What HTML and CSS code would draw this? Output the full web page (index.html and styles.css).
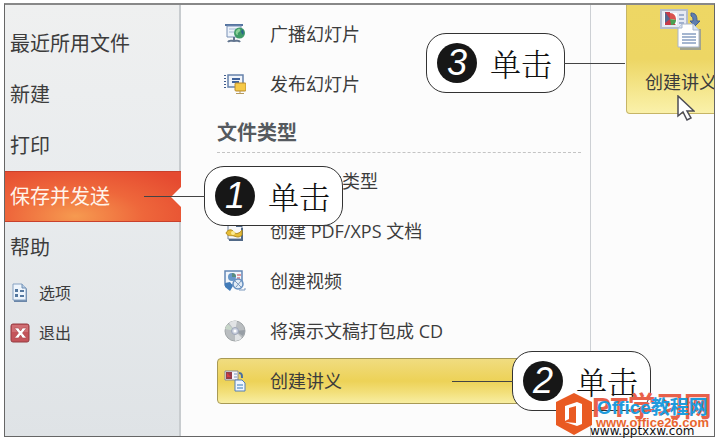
FILE: index.html
```html
<!DOCTYPE html>
<html lang="zh-CN">
<head>
<meta charset="utf-8">
<title>保存并发送</title>
<link rel="stylesheet" href="styles.css">
</head>
<body>
<div class="frame">
  <nav class="sidebar">
    <a class="nav-item" href="#">最近所用文件</a>
    <a class="nav-item" href="#">新建</a>
    <a class="nav-item" href="#">打印</a>
    <a class="nav-item active" href="#">保存并发送</a>
    <a class="nav-item" href="#">帮助</a>
    <a class="nav-item small" href="#">
      <svg class="nav-icon" viewBox="0 0 20 20"><path d="M4 2h9l4 4v13H4z" fill="#6b86a8"/><path d="M3 1h9l4 4v12H3z" fill="#eef5fc" stroke="#86a2c2"/><path d="M12 1v4h4" fill="#b9cfe6" stroke="#6f8eb2"/><path d="M5 6h3v3H5zM5 11h3v3H5z" fill="#54789f"/><path d="M10 8h4M10 13h4" stroke="#54789f" stroke-width="2"/></svg>
      选项</a>
    <a class="nav-item small" href="#">
      <svg class="nav-icon" viewBox="0 0 20 20"><rect x="1" y="1" width="18" height="18" rx="2" fill="#c4545a" stroke="#953c43"/><path d="M2 2h16v7H2z" fill="#d98084" opacity=".6"/><path d="M4.500 5h4l2 3 2-3h4l-4 5 4 5h-4l-2-3-2 3h-4l4-5z" fill="#fff" stroke="#a8464c" stroke-width=".6"/></svg>
      退出</a>
  </nav>
  <main class="content">
    <a class="row" href="#">
      <svg class="icon" viewBox="0 0 22 22"><path d="M1 2h18" stroke="#5574a0" stroke-width="2"/><path d="M3 3h14v11H3z" fill="#edf3fb" stroke="#7890b5"/><path d="M5 6h7M5 9h5" stroke="#a5b9d5"/><path d="M10 14v4M4 19c1-2 3-1 6-1s5-1 6 1" fill="none" stroke="#62758f" stroke-width="2"/><circle cx="15.500" cy="10" r="5.500" fill="#3f9b68"/><path d="M12 8c3-4 5-2 4 0s-3 1-2 4c-2 0-3-2-2-4z" fill="#8bd199"/><path d="M18 6c2 2 2 4 1 6l-2-3z" fill="#2b638b"/></svg>
      <span>广播幻灯片</span></a>
    <a class="row" href="#">
      <svg class="icon" viewBox="0 0 22 22"><path d="M1 2v14" stroke="#405c8e" stroke-width="2" stroke-dasharray="1 2"/><path d="M4 2h15v12H4z" fill="#f1f5fb" stroke="#6681aa" stroke-width="1.500"/><path d="M8 6h8M8 9h7" stroke="#40639b" stroke-width="2"/><rect x="11" y="10" width="11" height="8" rx="1" fill="#f6c947" stroke="#b78a2d"/><path d="M16 18v2M12 20.500h8" stroke="#b69a5d"/></svg>
      <span>发布幻灯片</span></a>
    <h2 class="heading">文件类型</h2>
    <a class="row" href="#">
      <svg class="icon" viewBox="0 0 22 22"><path d="M4 2h14v18H4z" fill="#eef4fb" stroke="#7890b5"/></svg>
      <span>更改文件类型</span></a>
    <a class="row" href="#">
      <svg class="icon" viewBox="0 0 22 22"><path d="M4 1h10l4 4v14H4z" fill="#f7f8fa" stroke="#70819a"/><path d="M13 1v5h5M18 8v12H5" fill="none" stroke="#516987" stroke-width="2"/><path d="M2 13c2-4 6-4 8-1s6 1 8-2v5c-3 3-5 2-8 1s-6 1-8-3z" fill="#e7bd36" stroke="#b28c22"/><circle cx="9" cy="13" r="2" fill="#fbea91"/></svg>
      <span>创建 PDF/XPS 文档</span></a>
    <a class="row" href="#">
      <svg class="icon" viewBox="0 0 22 22"><path d="M1 1h17v14H1z" fill="#f2f6fb" stroke="#6387b5" stroke-width="1.500"/><circle cx="8" cy="7" r="4" fill="#6797c9"/><path d="M8 3a4 4 0 0 1 4 4H8z" fill="#598d7d"/><path d="M13 5h4M13 8h3" stroke="#d47a82" stroke-width="1.500"/><path d="M1 13l5-1 3 4-3 5-5-4z" fill="#427bb8"/><circle cx="14" cy="14" r="5" fill="#e1ebf5" stroke="#668fc0" stroke-width="1.500"/><path d="M11 11l6 6M17 11l-5 6M15 20h6v-2" fill="none" stroke="#7c99bd"/></svg>
      <span>创建视频</span></a>
    <a class="row" href="#">
      <svg class="icon" viewBox="0 0 22 22"><circle cx="11" cy="11" r="10" fill="#b9bdc0" stroke="#a0a5a7"/><path d="M11 11L5 3a10 10 0 0 1 8-2zM11 11l7 7a10 10 0 0 1-7 3z" fill="#e1e3e5"/><path d="M11 11L1 9a10 10 0 0 1 3-5z" fill="#c7d6c9"/><path d="M11 11l10-1a10 10 0 0 1-2 6z" fill="#989fa6"/><circle cx="11" cy="11" r="3.500" fill="#cbd1df" stroke="#9da5b8"/><circle cx="11" cy="11" r="1.500" fill="#fff"/></svg>
      <span>将演示文稿打包成 CD</span></a>
    <a class="row selected" href="#">
      <svg class="icon" viewBox="0 0 22 22"><path d="M1 1h13v9H1z" fill="#f5f5fb" stroke="#898b91"/><path d="M2 2h6v7H2z" fill="#963d48"/><path d="M3 3l4 4H3z" fill="#d83c46"/><path d="M10 4h3M10 7h3" stroke="#7896b9"/><path d="M15 3c3 0 3 2 3 5" fill="none" stroke="#496f9f" stroke-width="2"/><path d="M11 10h7l3 3v8H11z" fill="#eff6ff" stroke="#527eb5"/><path d="M13 15h6M13 18h6" stroke="#73a2d1" stroke-width="1.500"/></svg>
      <span>创建讲义</span></a>
  </main>
  <aside class="panel">
    <button class="tile" type="button">
      <svg class="tile-icon" viewBox="0 0 42 42"><path d="M1 1h26v18H1z" fill="#e6eaf4" stroke="#b4bccb" stroke-width="2"/><path d="M4 4h13v12H4z" fill="#fff"/><path d="M5 3h5v7l6 6H5z" fill="#c63b4a"/><path d="M5 3l5 7-5 4z" fill="#55668f"/><path d="M10 4c4 0 6 3 6 7l-6-1z" fill="#d9534f"/><path d="M10 10l6 1c0 3-2 5-5 5z" fill="#4ba052"/><path d="M19 6h5M19 10h5M19 14h5" stroke="#9fb0ce" stroke-width="2"/><path d="M31 4c5 0 6 3 6 8h3l-5 5-5-5h3c0-3 0-4-2-5z" fill="#607eae" stroke="#425f92"/><path d="M20 20h21v21H20z" fill="#a2a38d"/><path d="M18 19l4-4h11l6 6v17H18z" fill="#fff" stroke="#a8b5cb"/><path d="M18 19h4v-4M33 15v6h6" fill="#d8e4f4" stroke="#a8b5cb"/><path d="M22 25h14M22 28h14M22 31h14M22 34h14" stroke="#889fc1" stroke-width="1.500"/></svg>
      <span>创建讲义</span>
    </button>
  </aside>
</div>

<div class="callout step-1"><b class="number">1</b><span>单击</span></div>
<div class="callout step-2"><b class="number">2</b><span>单击</span></div>
<div class="callout step-3"><b class="number">3</b><span>单击</span></div>
<svg class="cursor" viewBox="0 0 18 26"><path d="M1 1v20l5-4 4 8 4-2-4-7h7z" fill="#fff" stroke="#4c4c55" stroke-width="1.500"/></svg>

<div class="watermark">
  <span class="mark-back">PT学习网</span>
  <svg class="mark-logo" viewBox="0 0 38 42"><path d="M19 0l18 9v23l-18 10L1 32V9z" fill="#e95a22"/><path d="M10 13l12-4 5 2v20l-5 2-12-4 11 1V13l-7 2v11l-4 2z" fill="#fff"/></svg>
  <span class="mark-front">Office教程网</span>
  <span class="mark-url">www.office26.com</span>
  <span class="mark-site">www.pptxxw.com</span>
</div>
</body>
</html>
```
FILE: styles.css
```css
* { box-sizing: border-box; }

body {
  position: relative;
  min-height: 100vh;
  margin: 0;
  padding: 3px 4px 4px;
  display: flex;
  background: #fff;
  color: #3c3c3c;
  font-family: "Open Sans", "Noto Sans CJK SC", sans-serif;
}

a { color: inherit; text-decoration: none; }

.frame {
  flex: 1;
  display: grid;
  grid-template-columns: 176px 410px 1fr;
  border: 1px solid #666;
  border-top: 2px solid #888;
  background: #fcfcfc;
  overflow: hidden;
}

.sidebar {
  padding-top: 13px;
  border-right: 2px solid #c8cccf;
  background: linear-gradient(#eff0f0, #e9ecee 40%, #dfe3e6);
}

.nav-item {
  display: flex;
  align-items: center;
  height: 51px;
  padding-left: 5px;
  font-size: 20px;
  line-height: 24px;
}

.nav-item.active {
  position: relative;
  margin-right: -2px;
  border: solid #c9402c;
  border-width: 1px 0;
  background: radial-gradient(ellipse at 40% 90%, #f69a50, #ee673b 45%, #e54a30 90%);
  color: #fff4ea;
}

.nav-item.active::after {
  content: "";
  position: absolute;
  right: 0;
  border: 10px solid transparent;
  border-right-color: #fcfcfc;
  border-left: 0;
}

.nav-item.small {
  gap: 9px;
  height: 40px;
  font-size: 16px;
}

.nav-icon { width: 20px; height: 20px; }

.content {
  padding: 4px 9px 0 36px;
  border-right: 1px solid #cdd0d4;
}

.row {
  display: flex;
  align-items: center;
  gap: 24px;
  height: 50px;
  padding-left: 7px;
  font-size: 18px;
  line-height: 24px;
}

.icon { width: 22px; height: 22px; }

.heading {
  height: 44px;
  margin: 0 0 3px;
  padding-top: 12px;
  border-bottom: 1px dashed #c4c4c4;
  color: #555a5f;
  font-size: 20px;
  font-weight: 600;
  line-height: 24px;
}

.row.selected {
  height: 46px;
  margin-top: 2px;
  padding-left: 6px;
  border: 1px solid #a89a55;
  border-radius: 4px;
  background: linear-gradient(#f0dc80, #edd257 50%, #f2df79 75%, #f8eea2);
}

.tile {
  display: flex;
  flex-direction: column;
  align-items: center;
  gap: 18px;
  width: 110px;
  height: 109px;
  margin-left: 35px;
  padding: 4px 0 0;
  border: 1px solid #c6b566;
  border-top: 0;
  border-radius: 0 0 4px 4px;
  background: linear-gradient(#eed764, #edd664 50%, #f5e78f 80%, #faf1aa);
  color: #3c3c3c;
  font: 18px/24px "Noto Sans CJK SC", sans-serif;
}

.tile-icon { width: 42px; height: 42px; }

.callout {
  position: absolute;
  display: flex;
  align-items: center;
  gap: 13px;
  width: 139px;
  height: 60px;
  padding-left: 10px;
  border: 1px solid #333;
  border-radius: 20px;
  background: #fff;
  color: #111;
  font: 300 31px/40px "Noto Serif CJK SC", "Noto Sans CJK SC", serif;
}

.callout::before {
  content: "";
  position: absolute;
  right: 100%;
  width: 61px;
  height: 1px;
  background: #444;
}

.step-1 { left: 204px; top: 166px; }
.step-2 { left: 512px; top: 351px; }
.step-3 { left: 426px; top: 33px; }
.step-3::before { right: auto; left: 100%; }

.number {
  width: 40px;
  height: 40px;
  border-radius: 50%;
  background: #171717;
  color: #fff;
  font: italic 36px/40px "Liberation Sans", sans-serif;
  text-align: center;
}

.cursor {
  position: absolute;
  left: 677px;
  top: 95px;
  width: 18px;
  height: 26px;
}

.watermark {
  position: absolute;
  left: 555px;
  top: 392px;
  width: 160px;
  height: 48px;
  white-space: nowrap;
}

.watermark > * { position: absolute; }

.mark-logo { left: 0; top: 1px; width: 38px; height: 42px; }

.mark-back {
  left: 37px;
  top: 0;
  color: #e8604a;
  font: 700 28px/32px "Liberation Sans", "Noto Sans CJK SC", sans-serif;
}

.mark-front {
  left: 42px;
  top: 4px;
  color: #1f9bdc;
  font: 700 19px/24px "Liberation Sans", "Noto Sans CJK SC", sans-serif;
}

.mark-url {
  left: 41px;
  top: 22px;
  color: #e9662f;
  font: 700 13px/18px "Liberation Sans", sans-serif;
}

.mark-site {
  left: 35px;
  top: 31px;
  color: #111;
  font: 12px/16px "DejaVu Sans", sans-serif;
}
```
